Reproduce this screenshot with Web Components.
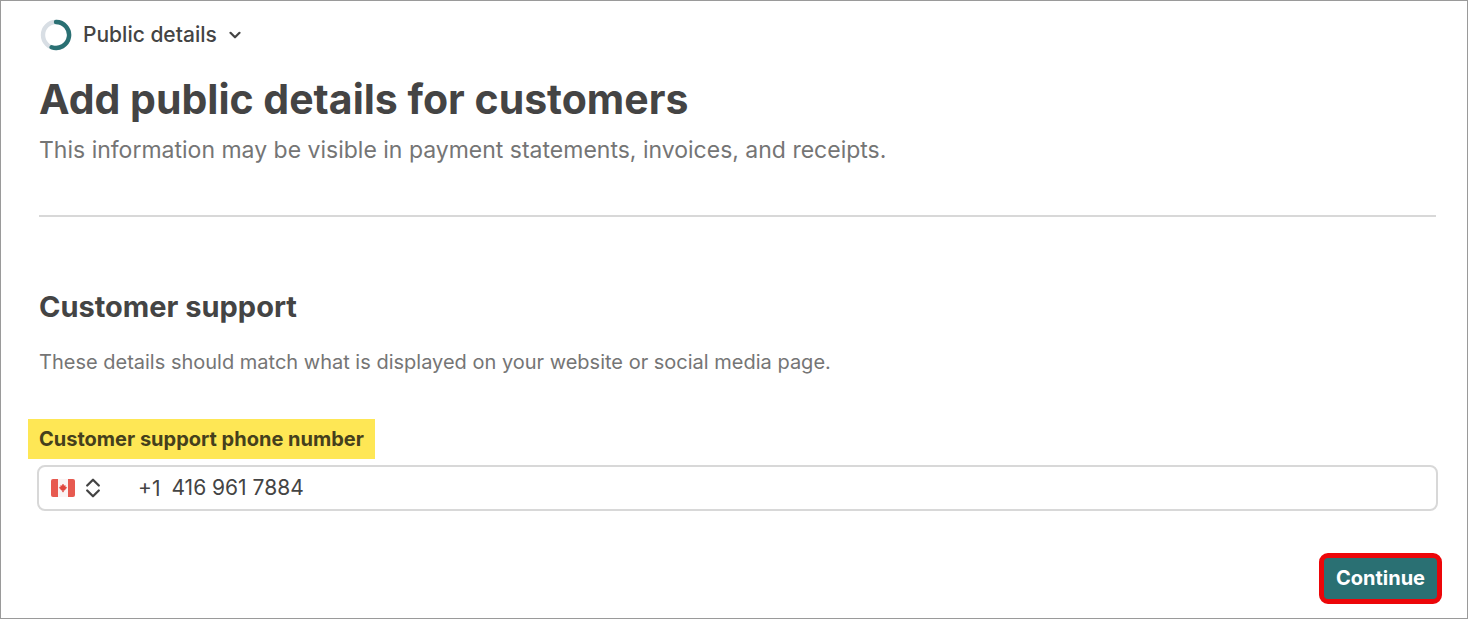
<!DOCTYPE html>
<html lang="en">
<head>
<meta charset="utf-8">
<meta name="viewport" content="width=device-width, initial-scale=1">
<title>Add public details for customers</title>
<style>
    html {
        --ink: #444444;
        --muted: #757575;
        --line: #d8d8d8;
        --accent: #2a7073;
    }
    body {
        margin: 0;
        background: #ffffff;
        color: var(--ink);
        font-family: Inter, "Liberation Sans", sans-serif;
    }
</style>
</head>
<body>
<setup-page>
    <step-menu slot="header">Public details</step-menu>
    <page-intro>
        <span slot="title">Add public details for customers</span>
        This information may be visible in payment statements, invoices, and receipts.
    </page-intro>
    <form-section>
        <span slot="title">Customer support</span>
        <span slot="hint">These details should match what is displayed on your website or social media page.</span>
        <phone-field label="Customer support phone number" prefix="+1" value="416 961 7884"></phone-field>
    </form-section>
    <primary-button slot="actions">Continue</primary-button>
</setup-page>

<script>
class SetupPage extends HTMLElement {
    constructor() {
        super();
        this.attachShadow({ mode: "open" }).innerHTML = `
    <style>
      :host {
        display: flex;
        flex-direction: column;
        box-sizing: border-box;
        min-height: 100vh;
        padding: 18px 31px 14px 38px;
        border: 1px solid #9a9a9a;
      }
      footer {
        display: flex;
        justify-content: flex-end;
        margin: 42px -6px 0 0;
      }
    </style>
    <header><slot name="header"></slot></header>
    <main><slot></slot></main>
    <footer><slot name="actions"></slot></footer>
    `;
    }
}

class StepMenu extends HTMLElement {
    constructor() {
        super();
        this.attachShadow({ mode: "open" }).innerHTML = `
    <style>
      :host {
        display: flex;
      }
      button {
        display: flex;
        align-items: center;
        padding: 0;
        border: 0;
        background: none;
        color: inherit;
        font: 500 21px/32px Inter, "Liberation Sans", sans-serif;
        cursor: pointer;
      }
      .ring {
        margin: 0 11px 0 1px;
      }
      .chevron {
        margin-left: 12px;
      }
    </style>
    <button type="button" aria-haspopup="true">
      <svg class="ring" width="32" height="32" viewBox="0 0 32 32" fill="none" stroke-width="4.400" aria-hidden="true">
        <circle cx="16" cy="16" r="13" stroke="#d8dee4"/>
        <path d="M16 3A13 13 0 1 1 11.600 28.200" stroke="#2a7073" stroke-linecap="round"/>
      </svg>
      <slot></slot>
      <svg class="chevron" width="12" height="8" viewBox="0 0 12 8" fill="none" stroke="currentColor" stroke-width="2.200" stroke-linecap="round" stroke-linejoin="round" aria-hidden="true">
        <path d="M1.500 1.800L6 6.300L10.500 1.800"/>
      </svg>
    </button>
    `;
    }
}

class PageIntro extends HTMLElement {
    constructor() {
        super();
        this.attachShadow({ mode: "open" }).innerHTML = `
    <style>
      :host {
        display: block;
        margin-top: 24px;
        padding-bottom: 49px;
        border-bottom: 2px solid var(--line);
      }
      h1 {
        margin: 0;
        font-size: 41px;
        font-weight: 700;
        line-height: 48px;
      }
      p {
        margin: 11px 0 0;
        color: var(--muted);
        font-size: 23px;
        line-height: 32px;
      }
    </style>
    <h1><slot name="title"></slot></h1>
    <p><slot></slot></p>
    `;
    }
}

class FormSection extends HTMLElement {
    constructor() {
        super();
        this.attachShadow({ mode: "open" }).innerHTML = `
    <style>
      :host {
        display: block;
        margin-top: 72px;
      }
      h2 {
        margin: 0;
        font-size: 29px;
        font-weight: 700;
        line-height: 36px;
      }
      p {
        margin: 23px 0 43px;
        color: var(--muted);
        font-size: 20px;
        line-height: 28px;
      }
    </style>
    <h2><slot name="title"></slot></h2>
    <p><slot name="hint"></slot></p>
    <slot></slot>
    `;
    }
}

class PhoneField extends HTMLElement {
    constructor() {
        super();
        this.attachShadow({ mode: "open" }).innerHTML = `
    <style>
      :host {
        display: flex;
        flex-direction: column;
        align-items: flex-start;
        gap: 6px;
        font-size: 21px;
      }
      label {
        margin-left: -11px;
        padding: 0 11px;
        background: #fee755;
        color: #45401c;
        font-size: 20px;
        font-weight: 700;
        line-height: 40px;
      }
      .box {
        display: flex;
        align-items: center;
        align-self: stretch;
        box-sizing: border-box;
        height: 46px;
        margin: 0 -2px;
        padding: 0 12px;
        border: 2px solid var(--line);
        border-radius: 8px;
      }
      .country {
        display: grid;
        align-items: center;
        width: 87px;
      }
      .country > * {
        grid-area: 1 / 1;
      }
      .face {
        display: flex;
        align-items: center;
        gap: 10px;
      }
      select {
        width: 50px;
        height: 32px;
        opacity: 0;
        cursor: pointer;
      }
      input {
        flex: 1;
        min-width: 0;
        margin-left: 11px;
        padding: 0;
        border: 0;
        outline: 0;
        background: none;
        color: inherit;
        font: inherit;
        line-height: 28px;
      }
    </style>
    <label for="phone"></label>
    <div class="box">
      <div class="country">
        <span class="face" aria-hidden="true">
          <svg width="24" height="18" viewBox="0 0 24 18">
            <rect width="24" height="18" rx="2" fill="#e75a50"/>
            <path d="M7 0H17V18H7Z" fill="#faf3f3"/>
            <path d="M12 5L13.200 7L14.300 6.600L14.100 8L15.700 8.300L15 9.600L13.500 11.200L12.400 11.200V13H11.600V11.200L10.500 11.200L9 9.600L8.300 8.300L9.900 8L9.700 6.600L10.800 7Z" fill="#e0453c" stroke="#e0453c" stroke-width=".5"/>
          </svg>
          <svg width="16" height="20" viewBox="0 0 16 20" fill="none" stroke="currentColor" stroke-width="2.300" stroke-linecap="round" stroke-linejoin="round">
            <path d="M2.200 7.500L8 1.800L13.800 7.500M2.200 12.500L8 18.200L13.800 12.500"/>
          </svg>
        </span>
        <select aria-label="Country"><option value="CA" aria-label="Canada"></option></select>
      </div>
      <span class="prefix"></span>
      <input id="phone" type="tel">
    </div>
    `;
    }
    connectedCallback() {
        const root = this.shadowRoot;
        root.querySelector("label").textContent = this.getAttribute("label");
        root.querySelector(".prefix").textContent = this.getAttribute("prefix");
        root.querySelector("input").value = this.getAttribute("value") || "";
    }
}

class PrimaryButton extends HTMLElement {
    constructor() {
        super();
        this.attachShadow({ mode: "open" }).innerHTML = `
    <style>
      :host {
        display: block;
      }
      button {
        display: block;
        padding: 0 12px;
        border: 5px solid #ec0609;
        border-radius: 9px;
        background: var(--accent);
        color: #ffffff;
        font: 700 20px/41px Inter, "Liberation Sans", sans-serif;
        cursor: pointer;
      }
    </style>
    <button type="button"><slot></slot></button>
    `;
    }
}

window.customElements.define("setup-page", SetupPage);
window.customElements.define("step-menu", StepMenu);
window.customElements.define("page-intro", PageIntro);
window.customElements.define("form-section", FormSection);
window.customElements.define("phone-field", PhoneField);
window.customElements.define("primary-button", PrimaryButton);
</script>
</body>
</html>
